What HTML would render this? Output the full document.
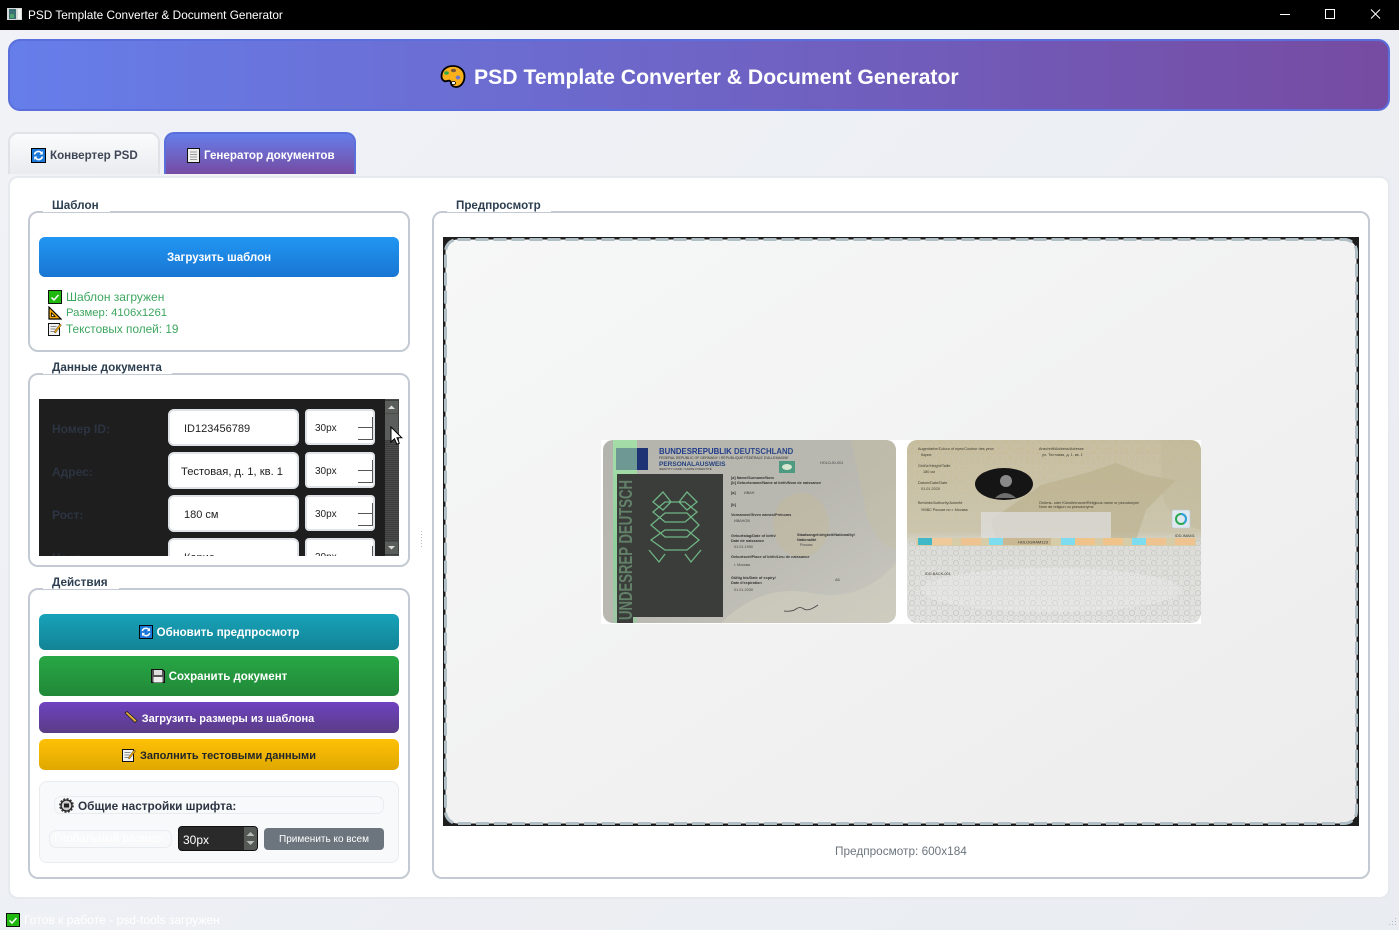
<!DOCTYPE html>
<html lang="ru"><head><meta charset="utf-8"><title>PSD Template Converter &amp; Document Generator</title>
<style>
*{box-sizing:border-box;margin:0;padding:0}
html,body{width:1399px;height:930px;overflow:hidden}
body{position:relative;background:linear-gradient(135deg,#f0f2f7,#e9ecf0);font-family:"Liberation Sans","Noto Sans CJK SC",sans-serif;font-size:12px;color:#333}
.a{position:absolute}
.t{position:absolute;white-space:nowrap;line-height:16px}
.g{position:absolute;background:#fff;border:2px solid #c4cad3;border-radius:10px}
.lb{position:absolute;background:#fff;height:14px;font-weight:bold;font-size:11.7px;color:#2c3e50;padding-left:9px;line-height:15px;white-space:nowrap}
.btn{position:absolute;left:39px;width:360px;border-radius:6px;color:#fff;font-weight:bold;font-size:11.5px;display:flex;align-items:center;justify-content:center;gap:4px;white-space:nowrap;padding-top:2px}
.btn svg{margin-top:-2px}
.in{position:absolute;left:168px;width:131px;height:37px;background:#fff;border:2px solid #dfe2e6;border-radius:6px;font-size:11px;line-height:37px;color:#222;white-space:nowrap;overflow:hidden}
.sp{position:absolute;left:305px;width:70px;height:36px;background:#fff;border:2px solid #dfe2e6;border-radius:4px;font-size:10px;line-height:36px;padding-left:8px;color:#222;overflow:hidden}
.sp i{position:absolute;right:0;top:6px;width:15px;height:11px;border-bottom:1px solid #555;border-right:1px solid #555}
.sp b{position:absolute;right:0;top:17px;width:15px;height:12px;border-bottom:1px solid #555;border-right:1px solid #555}
.rl{position:absolute;left:52px;font-weight:bold;font-size:12px;color:#2c3442;line-height:18px;white-space:nowrap}
svg{display:block}
</style></head><body>

<!-- title bar -->
<div class="a" style="left:0;top:0;width:1399px;height:30px;background:#000"></div>
<svg class="a" style="left:7px;top:8px" width="15" height="12"><rect width="15" height="12" fill="#d6dbd8"/><rect x="2" y="1" width="7" height="10" fill="#3b6f74"/><rect x="3" y="6" width="4" height="4" fill="#4fa36d"/><rect x="11" y="1" width="3" height="10" fill="#f3f3f3"/></svg>
<div class="t" style="left:28px;top:7px;color:#fff;font-size:11.8px">PSD Template Converter &amp; Document Generator</div>
<svg class="a" style="left:1270px;top:0" width="129" height="30" fill="none" stroke="#fff" stroke-width="1"><path d="M10 14.500h10"/><rect x="55.500" y="9.500" width="9" height="9"/><path d="M101 9.500l9 9M110 9.500l-9 9"/></svg>

<!-- header -->
<div class="a" style="left:8px;top:39px;width:1382px;height:72px;border:2px solid #5a6fdc;border-radius:12px;background:linear-gradient(90deg,#667eea,#764ba2)"></div>
<svg class="a" style="left:440px;top:64px" width="26" height="26" viewBox="0 0 26 26"><path d="M13 2C6 2 1.500 6.500 1.500 12c0 4 3 6 5.500 5 2-.8 3.500-.5 3.800 1.500.4 2.500 2 4.500 5.200 4.500 5 0 8.500-5 8.500-10.500C24.500 6 19.500 2 13 2z" fill="#fbb11c" stroke="#000" stroke-width="1.800"/><ellipse cx="13.500" cy="6.500" rx="2.600" ry="1.800" fill="#7b5a3a"/><ellipse cx="6.500" cy="9" rx="2.400" ry="1.800" fill="#2fa84a"/><ellipse cx="18" cy="13.500" rx="2.300" ry="2" fill="#6d78c8"/><ellipse cx="13.500" cy="19" rx="2" ry="1.600" fill="#fff" stroke="#000" stroke-width=".8"/></svg>
<div class="t" style="left:474px;top:65px;color:#fff;font-weight:bold;font-size:21.2px;line-height:26px">PSD Template Converter &amp; Document Generator</div>

<!-- tabs -->
<div class="a" style="left:8px;top:132px;width:152px;height:42px;border:2px solid #dfe2e6;border-bottom:0;border-radius:10px 10px 0 0;background:linear-gradient(#fafbfc,#e9ecef)"></div>
<div class="a" style="left:164px;top:132px;width:192px;height:42px;border:2px solid #5a6fdc;border-bottom:0;border-radius:10px 10px 0 0;background:linear-gradient(#667eea,#764ba2)"></div>
<svg class="a" style="left:31px;top:148px" width="15" height="15" viewBox="0 0 15 15"><rect width="15" height="15" fill="#000"/><rect x="1" y="1" width="13" height="13" fill="#1b78d8"/><path d="M3.500 6.500a4 4 0 0 1 7-1.500M11.500 8.500a4 4 0 0 1-7 1.500" fill="none" stroke="#fff" stroke-width="1.600"/><path d="M11.800 3v3.500H8.500zM3.200 12V8.500h3.300z" fill="#fff"/></svg>
<div class="t" style="left:50px;top:148px;font-weight:bold;font-size:11.6px;color:#3f4655">Конвертер PSD</div>
<svg class="a" style="left:187px;top:148px" width="13" height="15" viewBox="0 0 13 15"><rect x=".5" y=".5" width="12" height="14" fill="#efefef" stroke="#111"/><path d="M3 4h7M3 6.500h7M3 9h7M3 11.500h7" stroke="#999"/></svg>
<div class="t" style="left:204px;top:148px;font-weight:bold;font-size:11.6px;color:#fff">Генератор документов</div>

<!-- main -->
<div class="a" style="left:8px;top:176px;width:1382px;height:723px;background:#fff;border:2px solid #e6e9ee;border-radius:10px"></div>

<!-- group 1 -->
<div class="g" style="left:28px;top:211px;width:382px;height:141px"></div>
<div class="lb" style="left:43px;top:198px;width:67px;">Шаблон</div>
<div class="btn" style="top:237px;height:40px;background:linear-gradient(#2196f3,#1976d2)">Загрузить шаблон</div>
<svg class="a" style="left:48px;top:290px" width="14" height="14"><rect width="14" height="14" fill="#111"/><rect x="1" y="1" width="12" height="12" fill="#1eb80f"/><path d="M3.500 7.500l2.500 2.500 4.500-5" fill="none" stroke="#fff" stroke-width="1.500"/></svg>
<svg class="a" style="left:48px;top:306px" width="14" height="14" viewBox="0 0 14 14"><path d="M1 1l12 12H1z" fill="#f6a800" stroke="#000" stroke-width="1.200"/><path d="M3.500 7v3.500H7z" fill="#fff" stroke="#000" stroke-width=".8"/></svg>
<svg class="a" style="left:48px;top:322px" width="14" height="14" viewBox="0 0 14 14"><rect x=".5" y="1.500" width="11" height="12" fill="#f2f2f2" stroke="#111"/><path d="M2.500 4.500h6M2.500 7h5M2.500 9.500h4" stroke="#888"/><path d="M6 10l6-8 1.500 1-6 8z" fill="#f0a400" stroke="#444" stroke-width=".5"/></svg>
<div class="t" style="left:66px;top:289px;color:#3da65f;font-size:12px">Шаблон загружен</div>
<div class="t" style="left:66px;top:305px;color:#3da65f;font-size:11.3px">Размер: 4106x1261</div>
<div class="t" style="left:66px;top:321px;color:#3da65f;font-size:11.8px">Текстовых полей: 19</div>

<!-- group 2 -->
<div class="g" style="left:28px;top:373px;width:382px;height:194px"></div>
<div class="lb" style="left:43px;top:360px;width:129px;">Данные документа</div>
<div class="a" style="left:39px;top:399px;width:360px;height:157px;background:#1e1e1e;overflow:hidden">
  <div class="rl" style="left:13px;top:21px">Номер ID:</div>
  <div class="rl" style="left:13px;top:64px">Адрес:</div>
  <div class="rl" style="left:13px;top:107px">Рост:</div>
  <div class="rl" style="left:13px;top:150px">Цвет:</div>
  <div class="in" style="left:129px;top:10px;padding-left:14px">ID123456789</div>
  <div class="in" style="left:129px;top:53px;padding-left:11px;font-size:11.2px">Тестовая, д. 1, кв. 1</div>
  <div class="in" style="left:129px;top:96px;padding-left:14px">180 см</div>
  <div class="in" style="left:129px;top:139px;padding-left:14px">Карие</div>
  <div class="sp" style="left:266px;top:10px">30px<i></i><b></b></div>
  <div class="sp" style="left:266px;top:53px">30px<i></i><b></b></div>
  <div class="sp" style="left:266px;top:96px">30px<i></i><b></b></div>
  <div class="sp" style="left:266px;top:139px">30px<i></i><b></b></div>
  <div class="a" style="left:346px;top:0;width:14px;height:157px;background:repeating-linear-gradient(0deg,#4b4b4b 0 1px,#3d3d3d 1px 2px)"></div>
  <div class="a" style="left:346px;top:2px;width:13px;height:12px;background:#5a5f5c"></div>
  <div class="a" style="left:346px;top:15px;width:13px;height:26px;background:#5b5d5c"></div>
  <div class="a" style="left:346px;top:143px;width:13px;height:12px;background:#5a5f5c"></div>
  <svg class="a" style="left:346px;top:2px" width="13" height="153"><path d="M3 8l3.500-3.500L10 8z" fill="#ddd"/><path d="M3 145l3.500 3.500 3.500-3.500z" fill="#ddd"/></svg>
</div>
<svg class="a" style="left:390px;top:426px" width="13" height="20" viewBox="0 0 13 20"><path d="M1 1v15l3.500-3.300 2.300 5.500 2.500-1-2.300-5.400h4.800z" fill="#fff" stroke="#000"/></svg>

<!-- splitter -->
<div class="a" style="left:421px;top:531px;width:1px;height:16px;background:repeating-linear-gradient(#b5b8bd 0 1px,transparent 1px 3px)"></div>

<!-- group 3 -->
<div class="g" style="left:28px;top:588px;width:382px;height:291px"></div>
<div class="lb" style="left:43px;top:575px;width:76px;">Действия</div>
<div class="btn" style="top:614px;height:36px;background:linear-gradient(#17a2b8,#138496)"><svg width="14" height="14" viewBox="0 0 15 15"><rect width="15" height="15" fill="#000"/><rect x="1" y="1" width="13" height="13" fill="#1b78d8"/><path d="M3.500 6.500a4 4 0 0 1 7-1.500M11.500 8.500a4 4 0 0 1-7 1.500" fill="none" stroke="#fff" stroke-width="1.600"/><path d="M11.800 3v3.500H8.500zM3.200 12V8.500h3.300z" fill="#fff"/></svg>Обновить предпросмотр</div>
<div class="btn" style="top:656px;height:40px;background:linear-gradient(#28a745,#218838)"><svg width="14" height="14" viewBox="0 0 14 14"><path d="M.5.500h11l2 2v11H.500z" fill="#555" stroke="#111"/><rect x="3" y="1" width="8" height="5" fill="#ddd"/><rect x="2.500" y="8" width="9" height="5.500" fill="#eee"/></svg>Сохранить документ</div>
<div class="btn" style="top:702px;height:31px;font-size:11px;background:linear-gradient(#6f42c1,#5a3d85)"><svg width="14" height="13" viewBox="0 0 14 13"><path d="M1 2l2-1.500 10 9-2 2z" fill="#e8b13a" stroke="#222" stroke-width=".8"/></svg>Загрузить размеры из шаблона</div>
<div class="btn" style="top:739px;height:31px;font-size:11px;background:linear-gradient(#ffc107,#e0a800);color:#212529"><svg width="14" height="14" viewBox="0 0 14 14"><rect x=".5" y="1.500" width="11" height="12" fill="#f2f2f2" stroke="#111"/><path d="M2.500 4.500h6M2.500 7h5M2.500 9.500h4" stroke="#888"/><path d="M6 10l6-8 1.500 1-6 8z" fill="#f0a400" stroke="#444" stroke-width=".5"/></svg>Заполнить тестовыми данными</div>

<div class="a" style="left:39px;top:781px;width:360px;height:82px;background:#f8f9fa;border:1px solid #e9ecef;border-radius:8px"></div>
<div class="a" style="left:54px;top:796px;width:330px;height:18px;border:1px solid #e9ecef;border-radius:7px"></div>
<svg class="a" style="left:59px;top:798px" width="15" height="15" viewBox="0 0 15 15"><circle cx="7.500" cy="7.500" r="5.500" fill="#ccc" stroke="#222" stroke-width="1.300"/><circle cx="7.500" cy="7.500" r="6.700" fill="none" stroke="#333" stroke-width="1.300" stroke-dasharray="2 1.500"/><rect x="5" y="5.500" width="5" height="4" fill="#222"/></svg>
<div class="t" style="left:78px;top:798px;font-weight:bold;font-size:11.8px;color:#2c3442">Общие настройки шрифта:</div>
<div class="a" style="left:49px;top:830px;width:123px;height:18px;border:1px solid #e9ecef;border-radius:7px;color:#fff;font-size:11.5px;line-height:16px;padding-left:4px;white-space:nowrap;overflow:hidden">Глобальный размер:</div>
<div class="a" style="left:178px;top:826px;width:80px;height:25px;background:#2a2a2a;border:1px solid #111;border-radius:4px;color:#fff;font-size:12px;line-height:26px;padding-left:4px">30px</div>
<div class="a" style="left:244px;top:827px;width:13px;height:23px;background:#555a57;border-radius:0 3px 3px 0"></div>
<svg class="a" style="left:244px;top:827px" width="13" height="23"><path d="M2.500 9L6.500 5l4 4zM2.500 14l4 4 4-4z" fill="#b9bdb9"/></svg>
<div class="a" style="left:264px;top:828px;width:120px;height:22px;background:#6c757d;border-radius:4px;color:#fff;font-size:10px;line-height:24px;text-align:center">Применить ко всем</div>

<!-- preview group -->
<div class="g" style="left:432px;top:211px;width:938px;height:668px"></div>
<div class="lb" style="left:447px;top:198px;width:104px;font-size:11.6px">Предпросмотр</div>
<div class="a" style="left:443px;top:237px;width:916px;height:589px;background:#1e1e1e"></div>
<svg class="a" style="left:443px;top:237px" width="916" height="589"><defs><linearGradient id="pv" x1="0" y1="0" x2="1" y2="1"><stop offset="0" stop-color="#f6f7f7"/><stop offset=".5" stop-color="#f2f2f2"/><stop offset="1" stop-color="#ececec"/></linearGradient></defs><rect x="2.500" y="2.500" width="911" height="584" rx="12" fill="url(#pv)" stroke="#b0bec5" stroke-width="3" stroke-dasharray="13 5"/></svg>

<svg class="a" style="left:601px;top:440px" width="600" height="184" viewBox="0 0 600 184" font-family="Liberation Sans,sans-serif">
<defs>
<pattern id="hx" width="11" height="10" patternUnits="userSpaceOnUse"><circle cx="3" cy="3" r="2.600" fill="none" stroke="#c6c6c3" stroke-width=".8"/><circle cx="8.500" cy="8" r="2.600" fill="none" stroke="#cbcbc8" stroke-width=".8"/></pattern>
<linearGradient id="lc" x1="0" x2="1" y1="0" y2="1"><stop offset="0" stop-color="#b4b4ae"/><stop offset=".5" stop-color="#b9b8b0"/><stop offset="1" stop-color="#c9c8c0"/></linearGradient>
<linearGradient id="rc" x1="0" x2="0" y1="0" y2="1"><stop offset="0" stop-color="#c7bd9c"/><stop offset=".5" stop-color="#ccc5ab"/><stop offset=".58" stop-color="#dcdcd8"/><stop offset="1" stop-color="#e2e2e0"/></linearGradient>
<linearGradient id="st" x1="0" x2="0" y1="0" y2="1"><stop offset="0" stop-color="#a5dca8"/><stop offset=".6" stop-color="#8fcf9c"/><stop offset="1" stop-color="#8fcf9c" stop-opacity=".6"/></linearGradient>
<clipPath id="c1"><rect x="2" width="293" height="183" rx="10"/></clipPath>
<clipPath id="c2"><rect x="306" width="294" height="183" rx="10"/></clipPath>
</defs>
<rect width="600" height="184" fill="#fff"/>
<g clip-path="url(#c1)">
<rect x="2" width="293" height="183" fill="url(#lc)"/>
<ellipse cx="200" cy="85" rx="28" ry="32" fill="#c4bb9a" opacity=".45"/>
<path d="M250 0h45v110q-28-10-32-50z" fill="#c5bfa4" opacity=".45"/>
<path d="M120 183q40-40 90-30t85-30v60z" fill="#d2cfc0" opacity=".55"/>
<rect x="12" width="24" height="183" fill="url(#st)"/>
<rect x="15" y="8" width="32" height="22" fill="#1d3373"/>
<rect x="12" y="0" width="24" height="34" fill="#a5dca8" opacity=".6"/>
<rect x="16" y="34" width="106" height="143" fill="#3a3d3a"/>
<rect x="16" y="177" width="16" height="6" fill="#3a3d3a"/>
<text transform="translate(31 180) rotate(-90)" font-size="18" font-weight="bold" fill="#86b890" opacity=".55" textLength="140" lengthAdjust="spacingAndGlyphs">UNDESREP DEUTSCH</text>
<g fill="none" stroke="#6fb585" stroke-width="1.300"><path d="M52 62l10-10 8 10-8 8zM96 62l-10-10-8 10 8 8zM52 72l12-10h20l12 10-12 10H64zM50 85l14-12h22l12 12-12 12H64zM50 100l14-10h22l12 10-12 10H64zM48 110l10 12 6-8M100 110l-10 12-6-8"/></g>
<rect x="178" y="21" width="16" height="12" fill="#4d9a80"/><ellipse cx="186" cy="27" rx="5" ry="3" fill="#d8e8d0"/>
<text x="58" y="14" font-size="7.800" font-weight="bold" fill="#1e3a8a">BUNDESREPUBLIK <tspan fill="#2c468a">DEUTSCHLAND</tspan></text>
<text x="58" y="19" font-size="3.500" fill="#333">FEDERAL REPUBLIC OF GERMANY / RÉPUBLIQUE FÉDÉRALE D'ALLEMAGNE</text>
<text x="58" y="26" font-size="6.500" font-weight="bold" fill="#23407f">PERSONALAUSWEIS</text>
<text x="58" y="30" font-size="3" fill="#333">IDENTITY CARD / CARTE D'IDENTITÉ</text>
<text x="219" y="24" font-size="3.800" fill="#444">HOLO-ID-001</text>
<g font-size="3.800" fill="#333" font-weight="bold">
<text x="130" y="39">[a] Name/Surname/Nom</text><text x="130" y="44">[b] Geburtsname/Name at birth/Nom de naissance</text>
<text x="130" y="54">[a]</text><text x="130" y="66">[b]</text><text x="130" y="76">Vornamen/Given names/Prénoms</text>
<text x="130" y="97">Geburtstag/Date of birth/</text><text x="130" y="102">Date de naissance</text>
<text x="196" y="96">Staatsangehörigkeit/Nationality/</text><text x="196" y="101">Nationalité</text>
<text x="130" y="118">Geburtsort/Place of birth/Lieu de naissance</text>
<text x="130" y="139">Gültig bis/Date of expiry/</text><text x="130" y="144">Date d'expiration</text>
</g>
<g font-size="3.800" fill="#444"><text x="143" y="54">ИВАН</text><text x="133" y="82">ИВАНОВ</text><text x="133" y="108">01.01.1990</text><text x="199" y="106">Россия</text><text x="133" y="126">г. Москва</text><text x="133" y="151">01.01.2030</text><text x="234" y="141">АБ</text></g>
<path d="M183 171q8 1 12-2t8 0 14-4" fill="none" stroke="#444" stroke-width=".8"/>
</g>
<g clip-path="url(#c2)">
<rect x="306" width="294" height="183" fill="url(#rc)"/>
<rect x="306" y="0" width="294" height="100" fill="url(#hx)" opacity=".4"/>
<rect x="306" y="100" width="294" height="83" fill="url(#hx)"/>
<path d="M440 45l45-12 30-10 30 12 30 5-30 30-10 30h-140l-5-20z" fill="#b5ab86" opacity=".5"/>
<rect x="380" y="72" width="130" height="28" fill="#dedede" opacity=".75"/>
<path d="M560 0h40v90q-40-10-40-50z" fill="#bfb696" opacity=".4"/>
<ellipse cx="450" cy="150" rx="130" ry="22" fill="#f3f3f3" opacity=".3"/>
<rect x="315" y="98" width="280" height="8" fill="#d6cda8"/>
<rect x="317" y="98" width="14" height="7" fill="#40b8c8"/><rect x="331" y="98" width="20" height="7" fill="#f0c99a"/><rect x="360" y="98" width="20" height="7" fill="#efc38f"/><rect x="388" y="98" width="14" height="7" fill="#7edcf0"/><rect x="402" y="98" width="48" height="7" fill="#c9b892"/><rect x="460" y="98" width="14" height="7" fill="#7edcf0"/><rect x="474" y="98" width="20" height="7" fill="#f0c38a"/><rect x="502" y="98" width="20" height="7" fill="#f0c38a"/><rect x="531" y="98" width="14" height="7" fill="#7edcf0"/><rect x="545" y="98" width="20" height="7" fill="#efc38f"/><rect x="574" y="98" width="20" height="7" fill="#efc38f"/>
<text x="417" y="103.500" font-size="4" fill="#333">HOLOGRAM123</text>
<ellipse cx="403" cy="44" rx="29" ry="16" fill="#151515"/>
<circle cx="405" cy="41" r="6" fill="#8a8a8a"/><path d="M394 58q10-10 21 0z" fill="#6e6e6e"/>
<g font-size="3.800" fill="#3e3a2c">
<text x="317" y="10">Augenfarbe/Colour of eyes/Couleur des yeux</text><text x="320" y="16">Карие</text>
<text x="317" y="27">Größe/Height/Taille</text><text x="322" y="33">180 см</text>
<text x="317" y="44">Datum/Date/Date</text><text x="320" y="50">01.01.2020</text>
<text x="317" y="64">Behörde/Authority/Autorité</text><text x="320" y="71">УМВС России по г. Москва</text>
<text x="438" y="10">Anschrift/Address/Adresse</text><text x="441" y="16">ул. Тестовая, д. 1, кв. 1</text>
<text x="438" y="64">Ordens- oder Künstlername/Religious name or pseudonym/</text><text x="438" y="68">Nom de religion ou pseudonyme</text>
<text x="574" y="97">IDD-IMAM1</text>
<text x="324" y="135">IDD-BACK-001</text>
</g>
<rect x="571" y="70" width="18" height="18" rx="2" fill="#dfe7ef" stroke="#bcd" stroke-width=".6"/>
<circle cx="580" cy="79" r="5" fill="none" stroke="#2aa84f" stroke-width="2"/><path d="M580 74a5 5 0 0 1 3 9" fill="none" stroke="#2f9fe0" stroke-width="2"/>
</g>
</svg>

<div class="t" style="left:835px;top:843px;color:#6c757d;font-size:11.8px">Предпросмотр: 600x184</div>

<!-- status bar -->
<svg class="a" style="left:6px;top:913px" width="14" height="14"><rect width="14" height="14" fill="#111"/><rect x="1" y="1" width="12" height="12" fill="#1eb80f"/><path d="M3.500 7.500l2.500 2.500 4.500-5" fill="none" stroke="#fff" stroke-width="1.500"/></svg>
<div class="t" style="left:24px;top:912px;color:#fff;font-size:12.100px">Готов к работе - psd-tools загружен</div>
<svg class="a" style="left:1385px;top:916px" width="14" height="14" fill="#b5bac0"><rect x="10" y="2" width="1" height="1"/><rect x="7" y="5" width="1" height="1"/><rect x="10" y="5" width="1" height="1"/><rect x="4" y="8" width="1" height="1"/><rect x="7" y="8" width="1" height="1"/><rect x="10" y="8" width="1" height="1"/></svg>
</body></html>
